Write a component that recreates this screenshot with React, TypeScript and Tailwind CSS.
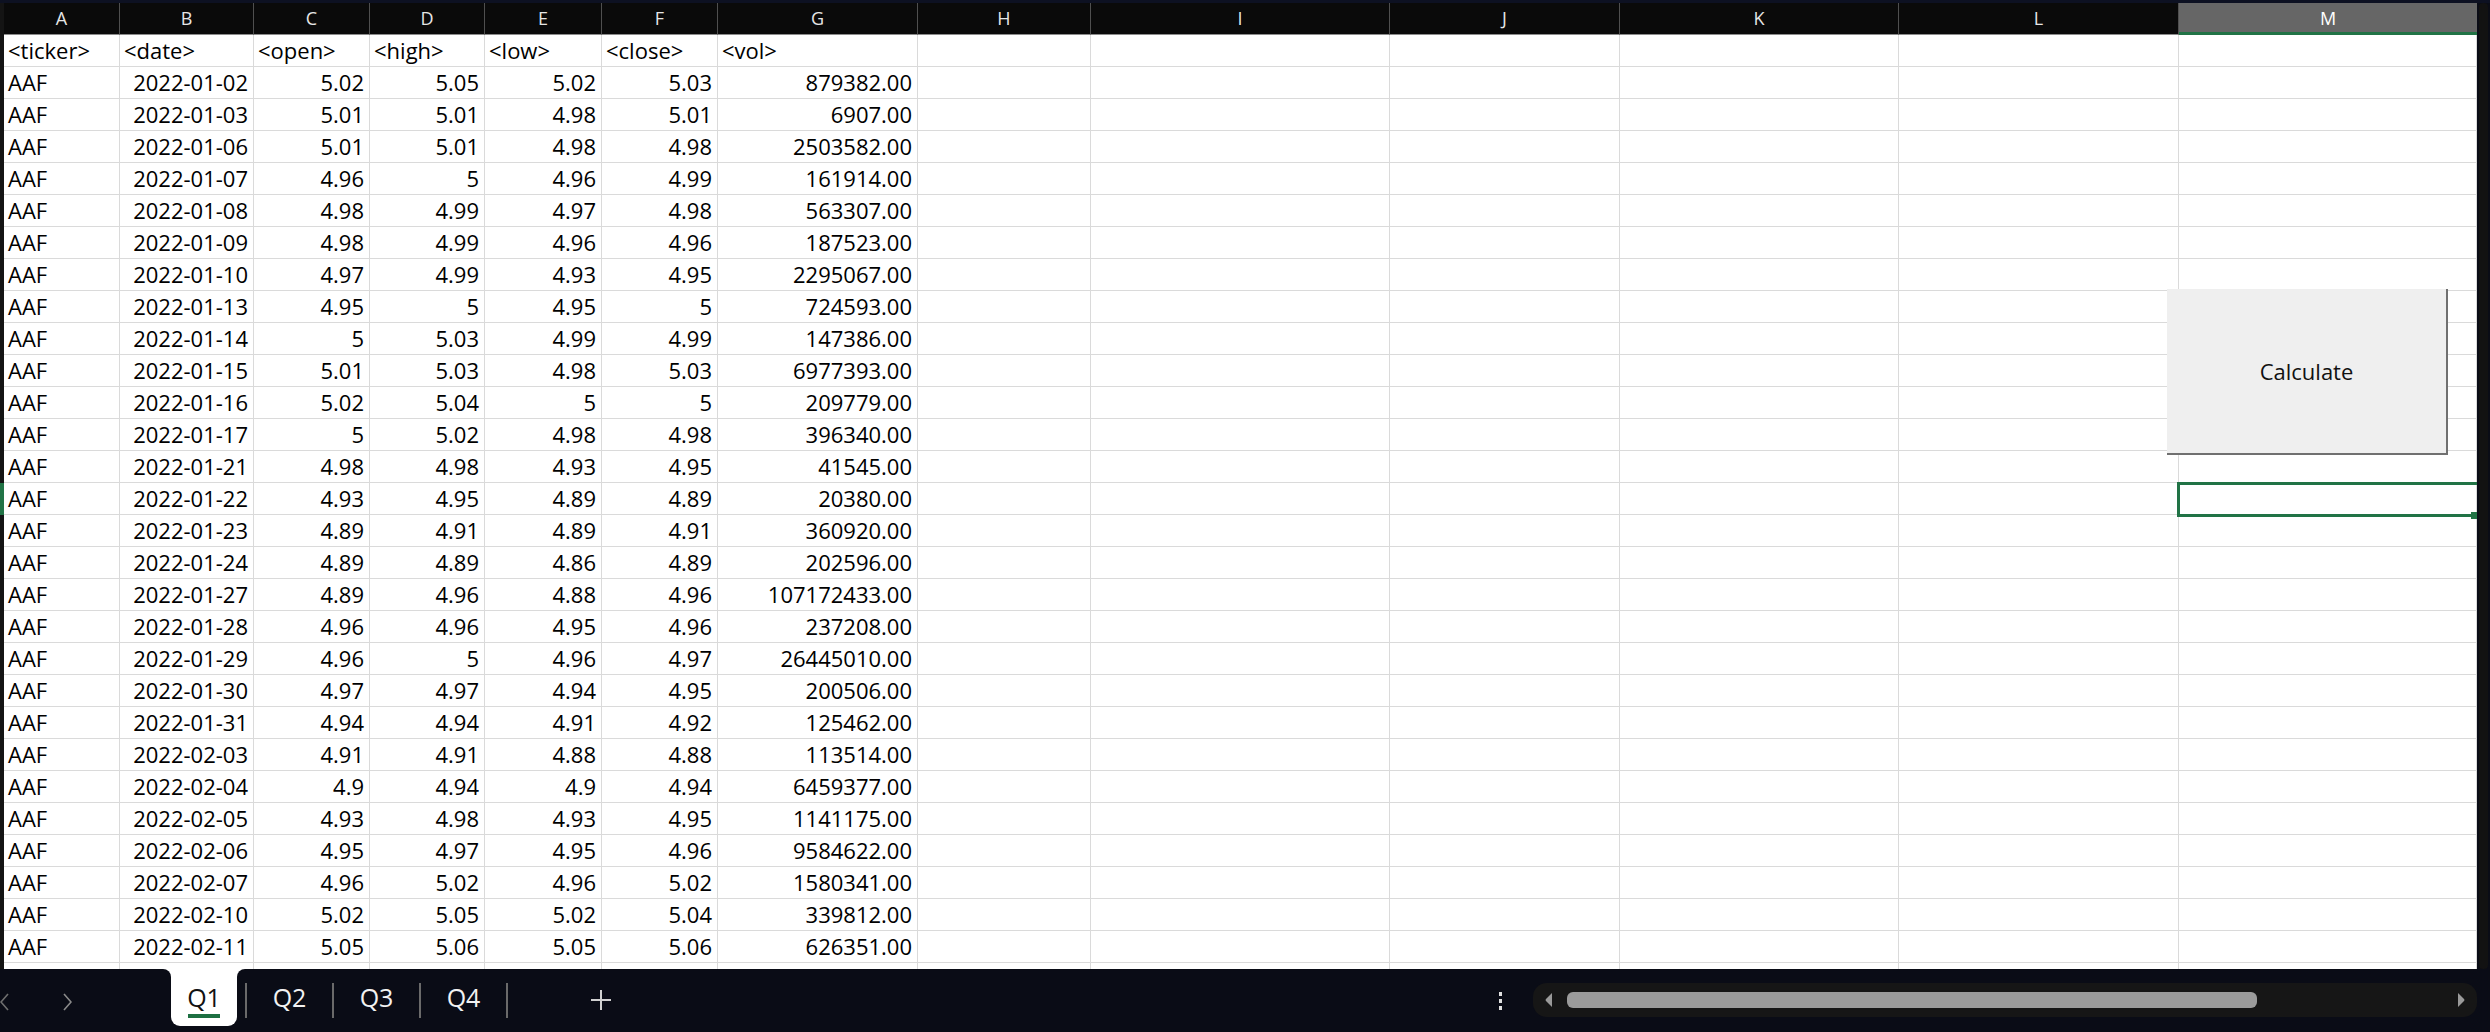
import React from 'react'

type Row = [string, string, string, string, string, string, string]

const columns = ['A', 'B', 'C', 'D', 'E', 'F', 'G', 'H', 'I', 'J', 'K', 'L', 'M']

const rows: Row[] = [
  ['2022-01-02', '5.02', '5.05', '5.02', '5.03', '879382.00', ''],
  ['2022-01-03', '5.01', '5.01', '4.98', '5.01', '6907.00', ''],
  ['2022-01-06', '5.01', '5.01', '4.98', '4.98', '2503582.00', ''],
  ['2022-01-07', '4.96', '5', '4.96', '4.99', '161914.00', ''],
  ['2022-01-08', '4.98', '4.99', '4.97', '4.98', '563307.00', ''],
  ['2022-01-09', '4.98', '4.99', '4.96', '4.96', '187523.00', ''],
  ['2022-01-10', '4.97', '4.99', '4.93', '4.95', '2295067.00', ''],
  ['2022-01-13', '4.95', '5', '4.95', '5', '724593.00', ''],
  ['2022-01-14', '5', '5.03', '4.99', '4.99', '147386.00', ''],
  ['2022-01-15', '5.01', '5.03', '4.98', '5.03', '6977393.00', ''],
  ['2022-01-16', '5.02', '5.04', '5', '5', '209779.00', ''],
  ['2022-01-17', '5', '5.02', '4.98', '4.98', '396340.00', ''],
  ['2022-01-21', '4.98', '4.98', '4.93', '4.95', '41545.00', ''],
  ['2022-01-22', '4.93', '4.95', '4.89', '4.89', '20380.00', ''],
  ['2022-01-23', '4.89', '4.91', '4.89', '4.91', '360920.00', ''],
  ['2022-01-24', '4.89', '4.89', '4.86', '4.89', '202596.00', ''],
  ['2022-01-27', '4.89', '4.96', '4.88', '4.96', '107172433.00', ''],
  ['2022-01-28', '4.96', '4.96', '4.95', '4.96', '237208.00', ''],
  ['2022-01-29', '4.96', '5', '4.96', '4.97', '26445010.00', ''],
  ['2022-01-30', '4.97', '4.97', '4.94', '4.95', '200506.00', ''],
  ['2022-01-31', '4.94', '4.94', '4.91', '4.92', '125462.00', ''],
  ['2022-02-03', '4.91', '4.91', '4.88', '4.88', '113514.00', ''],
  ['2022-02-04', '4.9', '4.94', '4.9', '4.94', '6459377.00', ''],
  ['2022-02-05', '4.93', '4.98', '4.93', '4.95', '1141175.00', ''],
  ['2022-02-06', '4.95', '4.97', '4.95', '4.96', '9584622.00', ''],
  ['2022-02-07', '4.96', '5.02', '4.96', '5.02', '1580341.00', ''],
  ['2022-02-10', '5.02', '5.05', '5.02', '5.04', '339812.00', ''],
  ['2022-02-11', '5.05', '5.06', '5.05', '5.06', '626351.00', ''],
]

const headerRow = ['<ticker>', '<date>', '<open>', '<high>', '<low>', '<close>', '<vol>']

function Cell({ value, right }: { value: string; right?: boolean }) {
  return (
    <div
      className={
        right
          ? 'h-[32px] overflow-visible whitespace-nowrap border-r border-b border-[#dadada] pr-[5px] text-right leading-[31px]'
          : 'h-[32px] overflow-visible whitespace-nowrap border-r border-b border-[#dadada] pl-[4px] text-left leading-[31px]'
      }
    >
      {value}
    </div>
  )
}

function SheetTab({ label }: { label: string }) {
  return (
    <div className="flex w-[85px] justify-center pt-[13px] text-[25px] leading-[30px] text-[#f2f2f2]">
      {label}
    </div>
  )
}

function TabSeparator() {
  return <div className="mt-[14px] h-[35px] w-[2px] bg-[#6a6a6a]" />
}

export default function App() {
  const empty = ['', '', '', '', '', '']

  return (
    <div className="flex h-[1032px] w-[2490px] flex-col overflow-hidden bg-[#0a0c16] font-['Open_Sans','Noto_Sans',sans-serif]">
      <div className="h-[3px] bg-[#0d1122]" />

      <div className="flex h-[966px]">
        {/* row headers collapsed to a thin strip */}
        <div className="flex w-[4px] flex-col bg-[#141414]">
          <div className="h-[480px]" />
          <div className="h-[32px] bg-[#217346]" />
        </div>

        <div className="relative w-[2473px] overflow-hidden bg-white">
          <div className="grid grid-cols-[116px_134px_116px_115px_117px_116px_200px_173px_299px_230px_279px_280px_298px] text-[22px] text-black">
            {columns.map((c) =>
              c === 'M' ? (
                <div
                  key={c}
                  className="flex h-[32px] items-center justify-center border-b-[3px] border-[#217346] bg-[#666666] pt-[2px] text-[18px] text-white"
                >
                  {c}
                </div>
              ) : (
                <div
                  key={c}
                  className="flex h-[32px] items-center justify-center border-r border-b border-r-[#4f4f4f] border-b-[#8c8c8c] bg-[#0a0a0a] text-[18px] text-[#e6e6e6]"
                >
                  {c}
                </div>
              )
            )}

            {headerRow.map((h, i) => (
              <Cell key={'h' + i} value={h} />
            ))}
            {empty.map((_, i) => (
              <Cell key={'he' + i} value="" />
            ))}

            {rows.map((r, ri) => (
              <React.Fragment key={ri}>
                <Cell value="AAF" />
                {r.slice(0, 6).map((v, ci) => (
                  <Cell key={ci} value={v} right />
                ))}
                {empty.map((_, i) => (
                  <Cell key={'e' + i} value="" />
                ))}
              </React.Fragment>
            ))}

            {[...columns].map((c) => (
              <Cell key={'last' + c} value="" />
            ))}
          </div>

          {/* form button on the sheet */}
          <div className="absolute left-[2163px] top-[286px] flex h-[166px] w-[281px] items-center justify-center border-r-2 border-b-2 border-[#707070] bg-[#efefef] text-[22px] text-[#111]">
            Calculate
          </div>

          {/* active cell M15 */}
          <div className="absolute left-[2173px] top-[479px] h-[35px] w-[304px] border-[3px] border-[#217346]">
            <div className="absolute -bottom-[5px] right-[0px] h-[7px] w-[7px] bg-[#217346]" />
          </div>
        </div>

        <div className="flex w-[13px] pl-[2px]">
          <div className="w-[9px] rounded-[4px] bg-[#121212]" />
        </div>
      </div>

      {/* sheet tabs + horizontal scroll */}
      <div className="flex h-[63px] items-start">
        <div className="flex w-[171px] items-start pt-[24px]">
          <svg width="9" height="18" viewBox="0 0 9 18" fill="none" stroke="#6f6f6f" strokeWidth="1.6">
            <polyline points="8,1 1,9 8,17" />
          </svg>
          <svg className="ml-[54px]" width="9" height="18" viewBox="0 0 9 18" fill="none" stroke="#8a8a8a" strokeWidth="1.6">
            <polyline points="1,1 8,9 1,17" />
          </svg>
        </div>

        <div className="relative flex h-[57px] w-[66px] flex-col items-center rounded-b-[9px] bg-white pt-[13px]">
          <div className="absolute -left-[8px] top-0 h-[8px] w-[8px] bg-white">
            <div className="h-[8px] w-[8px] rounded-tr-[8px] bg-[#0a0c16]" />
          </div>
          <div className="absolute -right-[8px] top-0 h-[8px] w-[8px] bg-white">
            <div className="h-[8px] w-[8px] rounded-tl-[8px] bg-[#0a0c16]" />
          </div>
          <div className="text-[25px] leading-[30px] text-[#111]">Q1</div>
          <div className="mt-[2px] h-[4px] w-[32px] bg-[#1d6f42]" />
        </div>

        <div className="w-[8px]" />
        <TabSeparator />
        <SheetTab label="Q2" />
        <TabSeparator />
        <SheetTab label="Q3" />
        <TabSeparator />
        <SheetTab label="Q4" />
        <TabSeparator />

        <svg className="ml-[82px] mt-[20px]" width="22" height="22" viewBox="0 0 22 22" fill="none" stroke="#d0d0d0" strokeWidth="2">
          <line x1="11" y1="1" x2="11" y2="21" />
          <line x1="1" y1="11" x2="21" y2="11" />
        </svg>

        <div className="flex-1" />

        <div className="mt-[23px] flex w-[4px] flex-col gap-[3px]">
          <div className="h-[4px] w-[3px] bg-[#e0e0e0]" />
          <div className="h-[4px] w-[3px] bg-[#e0e0e0]" />
          <div className="h-[4px] w-[3px] bg-[#e0e0e0]" />
        </div>

        <div className="ml-[30px] mr-[13px] mt-[14px] flex h-[34px] w-[944px] items-center rounded-[14px] bg-[#161616] pl-[11px] pr-[11px]">
          <svg width="9" height="16" viewBox="0 0 9 16" fill="#9a9a9a">
            <path d="M8 1 L2 7 Q1 8 2 9 L8 15 Z" />
          </svg>
          <div className="ml-[14px] h-[16px] w-[690px] rounded-[6px] bg-[#9b9b9b]" />
          <div className="flex-1" />
          <svg width="9" height="16" viewBox="0 0 9 16" fill="#9a9a9a">
            <path d="M1 1 L7 7 Q8 8 7 9 L1 15 Z" />
          </svg>
        </div>
      </div>
    </div>
  )
}
